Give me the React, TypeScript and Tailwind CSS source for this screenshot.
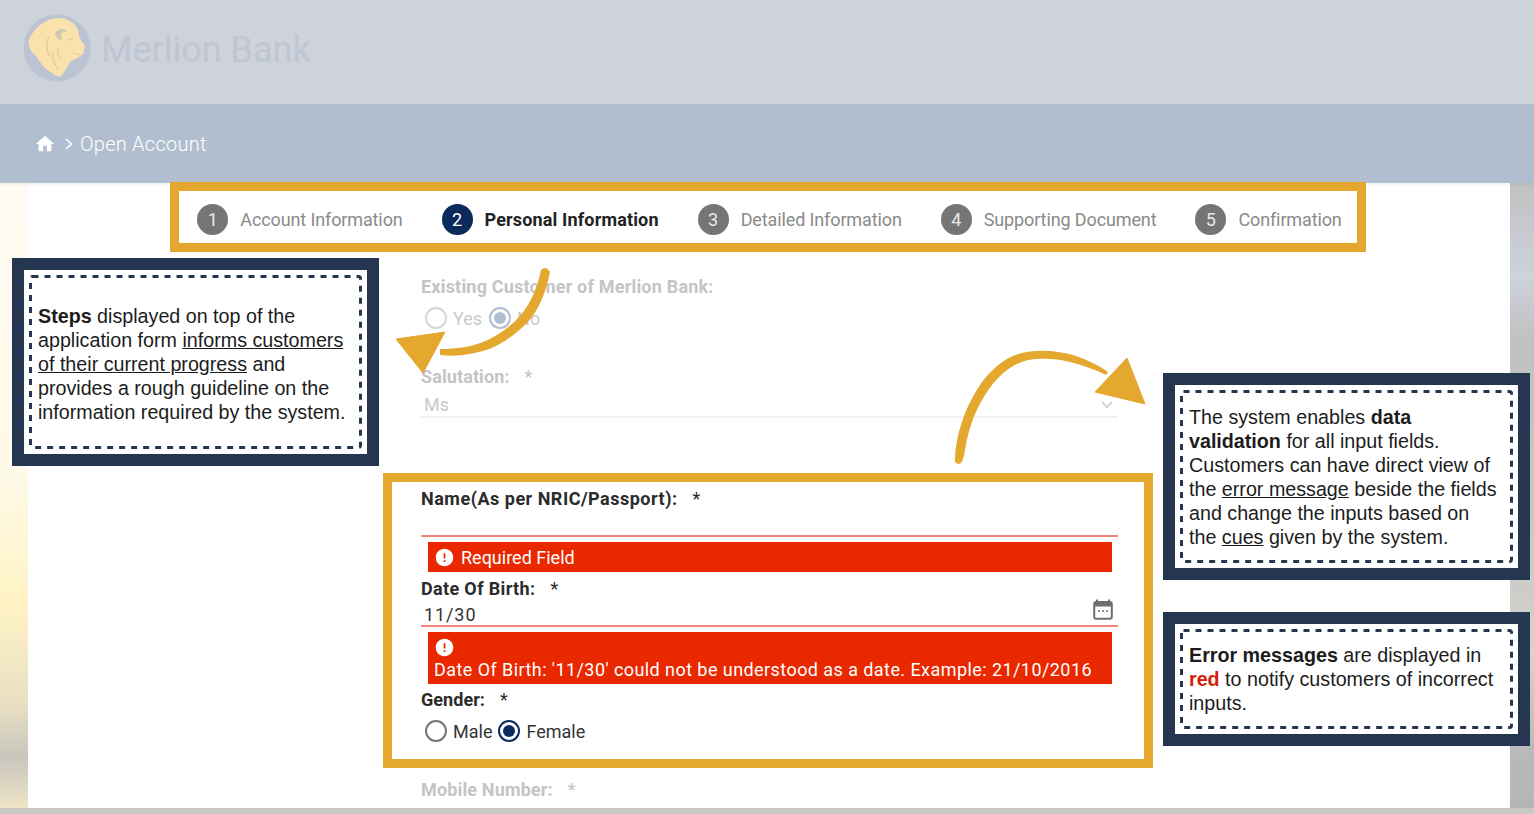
import React from "react";
import { MdHome, MdError } from "react-icons/md";

const FF = { fontFamily: "Roboto, 'Liberation Sans', sans-serif" };

function Step({ n, label, active }: { n: number; label: string; active?: boolean }) {
  return (
    <div className="flex items-center gap-[12px]">
      <div className={`w-[31px] h-[31px] rounded-full flex items-center justify-center text-[18px] text-[#e8e8e8] ${active ? "bg-[#0b2a5b] text-white" : "bg-[#757575]"}`}>{n}</div>
      <span className={`text-[18px] ${active ? "font-bold text-[#222222] tracking-[0.15px]" : "text-[#8a8a8a] tracking-[-0.12px]"}`}>{label}</span>
    </div>
  );
}

function Radio({ checked, faded, label }: { checked?: boolean; faded?: boolean; label: string }) {
  const ring = checked ? (faded ? "border-[#aebdd2]" : "border-[#0b2a5b]") : faded ? "border-[#d6d6d6]" : "border-[#757575]";
  const dot = faded ? "bg-[#aebdd2]" : "bg-[#0b2a5b]";
  return (
    <div className="flex items-center gap-[6px]">
      <div className={`w-[22px] h-[22px] rounded-full border-2 bg-white flex items-center justify-center ${ring}`}>
        {checked && <div className={`w-[12px] h-[12px] rounded-full ${dot}`} />}
      </div>
      <span className={`text-[18px] ${faded ? "text-[#c9c9c9]" : "text-[#333333]"}`}>{label}</span>
    </div>
  );
}

function Label({ text, faded, className = "" }: { text: string; faded?: boolean; className?: string }) {
  return (
    <div className={`flex items-center gap-[15px] text-[18px] font-bold ${faded ? "text-[#c4c4c4]" : "text-[#2b2b2b]"} ${className}`}>
      <span>{text}</span>
      <span className="font-normal">*</span>
    </div>
  );
}

function Annotation({ className, innerClass = "", children }: { className: string; innerClass?: string; children: React.ReactNode }) {
  return (
    <div className={`absolute border-[12px] border-[#243650] bg-white p-[5px] ${className}`}>
      <div className={`relative h-full flex items-center pl-[9px] text-[19.7px] leading-[24px] text-[#1c1c1c] ${innerClass}`} style={{ fontFamily: "'Liberation Sans', Arial, sans-serif" }}>
        <svg className="absolute inset-0 w-full h-full" fill="none">
          <rect x="1.5" y="1.5" rx="2" className="w-[calc(100%-3px)] h-[calc(100%-3px)]" stroke="#243650" strokeWidth="3" strokeDasharray="6 6" />
        </svg>
        <p className="relative">{children}</p>
      </div>
    </div>
  );
}

function Logo() {
  return (
    <svg width="68" height="68" viewBox="0 0 68 68" className="shrink-0">
      <circle cx="34" cy="34" r="33.5" fill="#bcc4d4" />
      <path fill="#f9e2ab" d="M24 7 C29 4 37 3 42 5 C47 6 52 10 54 14 C56 18 56 22 57 25 C59 28 62 30 62 33 C62 35 60 36 61 38 C60 41 57 42 56 43 C52 46 49 46 47 48 C46 51 44 53 42 56 C41 59 38 62 36 63 C33 61 30 61 28 58 C25 57 23 55 21 53 C18 49 15 46 13 42 C10 40 8 37 7 34 C5 30 5 27 7 23 C9 19 12 16 15 13 C18 10 21 8 24 7 Z" />
      <path fill="#cfc8b2" d="M32 20 C33 17 36 15 39 15 C42 15 44 16 45 17 C42 17 39 18 38 20 C38 22 39 24 38 27 C36 25 33 23 32 20 Z" />
      <path fill="none" stroke="#e4cd98" strokeWidth="1.3" d="M45 26 L50 25 M35 34 C34 39 36 43 39 46 M57 41 L50 39 M26 22 C23 28 23 35 26 42 M30 38 C29 44 31 50 35 55" />
    </svg>
  );
}

export default function App() {
  return (
    <div className="relative w-[1534px] h-[814px] overflow-hidden bg-white" style={FF}>
      <header className="h-[104px] bg-[#cdd2db] flex items-start pt-[14px] pl-[23px] gap-[10px]">
        <Logo />
        <span className="text-[36px] leading-[54px] mt-[9px] text-[#bfc6d3]">Merlion Bank</span>
      </header>

      <div className="relative h-[79px] bg-[#b1becf] flex items-center pl-[34px] text-white shadow-[0_1px_3px_rgba(0,0,0,0.08)]">
        <MdHome size={22} />
        <svg width="10" height="14" viewBox="0 0 10 14" className="ml-[8px] mr-[6px]"><path d="M2 2 L7.5 7 L2 12" fill="none" stroke="white" strokeWidth="1.6" /></svg>
        <span className="text-[20px] font-light tracking-[0.25px]">Open Account</span>
      </div>

      <main className="flex h-[625px]">
        <div className="w-[28px] bg-[linear-gradient(to_bottom,#fdfbf2_0%,#fefaea_45%,#fff3c5_67%,#e9e0c2_83%,#c9c6bd_92%,#efe5c7_100%)]" />
        <div className="w-[1482px] bg-white">
          <div className="-mt-px ml-[142px] w-[1196px] h-[70px] border-[9px] border-[#e5a82f] bg-white flex items-center justify-center gap-[39px] relative pl-[3px] pt-[4px]">
            <Step n={1} label="Account Information" />
            <Step n={2} label="Personal Information" active />
            <Step n={3} label="Detailed Information" />
            <Step n={4} label="Supporting Document" />
            <Step n={5} label="Confirmation" />
          </div>

          <div className="ml-[393px] w-[697px] h-[221px] pt-[22px]">
            <div className="text-[18px] font-bold tracking-[0.2px] text-[#c4c4c4] h-[24px] flex items-center">Existing Customer of Merlion Bank:</div>
            <div className="flex gap-[7px] pl-[4px] mt-[5px] h-[30px] items-center">
              <Radio faded label="Yes" />
              <Radio faded checked label="No" />
            </div>
            <Label faded text="Salutation:" className="mt-[31px] h-[24px] tracking-[0.1px]" />
            <div className="h-[25px] mt-[5px] pl-[3px] border-b-2 border-[#f1f1f1] text-[18px] text-[#c9c9c9] flex items-center justify-between pr-[3px]">
              <span>Ms</span>
              <svg width="14" height="10" viewBox="0 0 14 10" className="mr-[1px]"><path d="M2 2 L7 7 L12 2" fill="none" stroke="#c9c9c9" strokeWidth="1.6" /></svg>
            </div>
          </div>

          <div className="ml-[355px] w-[770px] h-[295px] border-[9px] border-[#e5a82f] bg-white pl-[29px] pr-[26px] relative">
            <Label text="Name(As per NRIC/Passport):" className="h-[32px] tracking-[0.5px]" />
            <div className="h-[19px] border-b-2 border-[#f0857a] mt-[2px] box-content" />
            <div className="h-[30px] ml-[7px] mr-[6px] mt-[5px] bg-[#ea2800] flex items-center pl-[6px] gap-[6px] text-white text-[18px]">
              <MdError size={21} />
              <span>Required Field</span>
            </div>
            <Label text="Date Of Birth:" className="h-[32px] tracking-[0.35px]" />
            <div className="relative h-[21px] border-b-2 border-[#f0857a] pl-[3px] text-[18px] text-[#333333] flex items-center box-content tracking-[0.9px]">
              <span>11/30</span>
              <svg width="20" height="21" viewBox="0 0 20 21" className="absolute right-[5px] -top-[5px]">
                <path d="M4 0.5 V3 M16 0.5 V3" stroke="#6f6f6f" strokeWidth="2" />
                <rect x="1.2" y="3" width="17.6" height="16.8" rx="2" fill="#fff" stroke="#6f6f6f" strokeWidth="2" />
                <rect x="1" y="3" width="18" height="4.5" fill="#6f6f6f" />
                <circle cx="6" cy="12" r="1" fill="#6f6f6f" /><circle cx="10" cy="12" r="1" fill="#6f6f6f" /><circle cx="14" cy="12" r="1" fill="#6f6f6f" />
              </svg>
            </div>
            <div className="h-[52px] ml-[7px] mr-[6px] mt-[5px] bg-[#ea2800] text-white text-[18px] pl-[6px] pt-[5px] leading-[21px] tracking-[0.43px]">
              <MdError size={21} className="mb-[1px]" />
              <div className="whitespace-nowrap">Date Of Birth: '11/30' could not be understood as a date. Example: 21/10/2016</div>
            </div>
            <Label text="Gender:" className="h-[30px] tracking-[0.05px]" />
            <div className="flex gap-[6px] pl-[4px] mt-[2px] h-[30px] items-center">
              <Radio label="Male" />
              <Radio checked label="Female" />
            </div>
          </div>
          <Label faded text="Mobile Number:" className="ml-[393px] mt-[9px] h-[24px] tracking-[0.15px]" />
        </div>
        <div className="w-[24px] bg-[linear-gradient(to_bottom,#bfc1c2_0%,#cdd2db_15%,#c0c1c1_25%,#ccccc8_65%,#d8d4c8_75%,#b8b9ba_91%,#b5b5b5_100%)]" />
      </main>
      <div className="h-[6px] bg-[#c8c8c4]" />

      <Annotation className="left-[12px] top-[258px] w-[367px] h-[208px]" innerClass="pt-[4px]">
        <b className="font-bold">Steps</b> displayed on top of the<br />
        application form <u>informs customers</u><br />
        <u>of their current progress</u> and<br />
        provides a rough guideline on the<br />
        information required by the system.
      </Annotation>

      <Annotation className="left-[1163px] top-[373px] w-[367px] h-[207px]">
        The system enables <b className="font-bold">data</b><br />
        <b className="font-bold">validation</b> for all input fields.<br />
        Customers can have direct view of<br />
        the <u>error message</u> beside the fields<br />
        and change the inputs based on<br />
        the <u>cues</u> given by the system.
      </Annotation>

      <Annotation className="left-[1163px] top-[612px] w-[367px] h-[134px]">
        <b className="font-bold">Error messages</b> are displayed in<br />
        <b className="font-bold text-[#d0200a]">red</b> to notify customers of incorrect<br />
        inputs.
      </Annotation>

      <svg width="1534" height="814" viewBox="0 0 1534 814" className="absolute left-0 top-0 pointer-events-none">
        <path fill="#e5a82f" d="M541 270 C537 290 529 306 519 317 C509 328 497 336 483 342 C470 347 456 349 440 349 L440 355 C458 357 474 354 489 349 C504 343 517 333 527 323 C538 311 546 293 550 272 Q546 265 541 270 Z" />
        <path d="M396 339 L445 332 L423 373 Z" fill="#e5a82f" stroke="#e5a82f" strokeLinejoin="round" strokeWidth="1" />
        <path fill="#e5a82f" d="M955 458 C956 435 964 410 978 388 C990 370 1005 357 1022 353 C1040 349 1060 351 1076 356 C1088 360 1098 365 1108 372 L1106 375 C1094 369 1082 365 1070 362 C1055 358 1040 358 1028 360 C1012 364 1000 374 989 389 C977 406 969 425 965 450 Q963 465 958 464 Q954 463 955 458 Z" />
        <path d="M1127 358 L1145 404 L1095 392 Z" fill="#e5a82f" stroke="#e5a82f" strokeLinejoin="round" strokeWidth="1" />
      </svg>
    </div>
  );
}
